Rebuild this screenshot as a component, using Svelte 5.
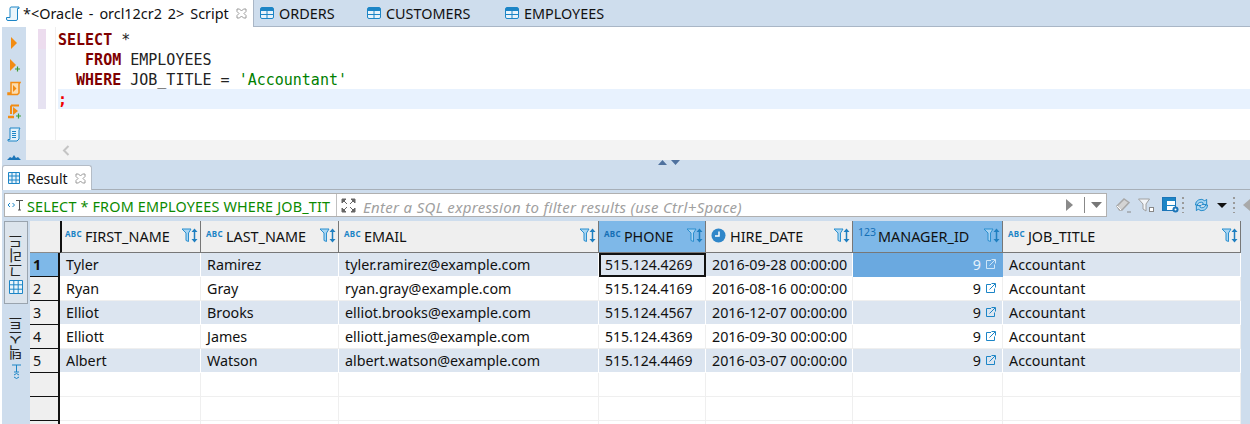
<script>
  const cols = [
    { name: 'FIRST_NAME', type: 'ABC', key: 0 },
    { name: 'LAST_NAME', type: 'ABC', key: 1 },
    { name: 'EMAIL', type: 'ABC', key: 2 },
    { name: 'PHONE', type: 'ABC', key: 3, sel: true },
    { name: 'HIRE_DATE', type: 'clock', key: 4 },
    { name: 'MANAGER_ID', type: '123', key: 5, sel: true },
    { name: 'JOB_TITLE', type: 'ABC', key: 6 }
  ];
  const rows = [
    ['Tyler', 'Ramirez', 'tyler.ramirez@example.com', '515.124.4269', '2016-09-28 00:00:00', '9', 'Accountant'],
    ['Ryan', 'Gray', 'ryan.gray@example.com', '515.124.4169', '2016-08-16 00:00:00', '9', 'Accountant'],
    ['Elliot', 'Brooks', 'elliot.brooks@example.com', '515.124.4567', '2016-12-07 00:00:00', '9', 'Accountant'],
    ['Elliott', 'James', 'elliott.james@example.com', '515.124.4369', '2016-09-30 00:00:00', '9', 'Accountant'],
    ['Albert', 'Watson', 'albert.watson@example.com', '515.124.4469', '2016-03-07 00:00:00', '9', 'Accountant'],
    ['', '', '', '', '', '', ''],
    ['', '', '', '', '', '', ''],
    ['', '', '', '', '', '', '']
  ];
  const tabs = ['ORDERS', 'CUSTOMERS', 'EMPLOYEES'];
</script>

{#snippet close()}
  <svg class="close" width="11" height="11" viewBox="0 0 11 11"><path d="M1 1h2.500l2 2 2-2H10v2.500l-2 2 2 2V10H7.500l-2-2-2 2H1V7.500l2-2-2-2z" fill="#fff" stroke="#9a9a9a"/></svg>
{/snippet}

{#snippet tableIcon()}
  <svg class="ticon" width="14" height="12" viewBox="0 0 14 12"><rect x=".5" y=".5" width="13" height="11" rx="1.500" fill="#e8f3fb" stroke="#1c85c6"/><rect x="1" y="1" width="12" height="3" fill="#1c85c6"/><path d="M1 7.500h12M7 4v7" stroke="#1c85c6"/></svg>
{/snippet}

{#snippet filterIcon(dim)}
  <svg class="ficon" class:dim width="17" height="15" viewBox="0 0 17 15"><path d="M1 1h9L7.500 5v8.500l-2.500-1V5z" fill="#a9d6f3" stroke="#2b8fcf"/><path d="M13.500 3v9" stroke="#1f7fc0" stroke-width="1.500"/><path d="M13.500 .5l-3 3.500h6zM13.500 14.500l-3-3.500h6z" fill="#1f7fc0"/></svg>
{/snippet}

<div class="app">
  <div class="tabbar">
    <div class="tab-active">
      <svg width="14" height="15" viewBox="0 0 14 15"><path d="M5 1h8v1.500h-1.500V13a1.500 1.500 0 0 1-1.500 1.500H2a1.500 1.500 0 0 1-1.500-1.500v-1.500H4V2.500A1.500 1.500 0 0 1 5 1z" fill="#eaf5fb" stroke="#1c85c6"/></svg>
      <span class="tab-title">*&lt;Oracle - orcl12cr2 2&gt; Script</span>
      {@render close()}
    </div>
    {#each tabs as t}
      <div class="tab">{@render tableIcon()}<span>{t}</span></div>
    {/each}
  </div>

  <div class="main">
    <div class="editor">
      <div class="side">
        <svg width="10" height="12" viewBox="0 0 10 12"><path d="M2 0l6 6-6 6z" fill="#f28c13"/></svg>
        <svg width="14" height="14" viewBox="0 0 14 14"><path d="M3 0l6 6-6 6z" fill="#f28c13"/><path d="M10.500 7.500v5M8 10h5" stroke="#3f9c35" stroke-width="1.200"/></svg>
        <svg width="14" height="15" viewBox="0 0 14 15"><path d="M4 1.500h9l-1 1.500v9l-1.500 1.500H1V12h3z" fill="#fcdcae" stroke="#f28c13" stroke-width="1.500"/><path d="M6 4l3.500 3.500L6 11z" fill="#f28c13"/></svg>
        <svg width="15" height="15" viewBox="0 0 15 15"><path d="M4 1.500h8M4 1.500V10" stroke="#f28c13" stroke-width="2"/><path d="M6 3l5 4-5 4z" fill="#f28c13"/><path d="M1 13h6" stroke="#f28c13" stroke-width="2.500"/><path d="M11.500 9.500v5M9 12h5" stroke="#3f9c35" stroke-width="1.200"/></svg>
        <svg width="14" height="15" viewBox="0 0 14 15"><path d="M3 1h10l-1 2v9l-2 2H1v-1.500h2z" fill="#e3f1fa" stroke="#1c85c6"/><path d="M5 4.500h4M5 6.500h4M5 8.500h4M5 10.500h4" stroke="#1c85c6"/></svg>
        <svg class="cut" width="14" height="8" viewBox="0 0 14 8"><path d="M0 6l3-3 2 1 2-3 2 3 2-1 3 3v2H0z" fill="#1c75b8"/></svg>
      </div>
      <div class="edit-main">
        <div class="code-area">
          <div class="ruler"><div class="mark"></div></div>
          <div class="code">
            <div class="ln"><b class="kw">SELECT</b> *</div>
            <div class="ln">{'   '}<b class="kw">FROM</b> EMPLOYEES</div>
            <div class="ln">{'  '}<b class="kw">WHERE</b> JOB_TITLE = <span class="str">'Accountant'</span></div>
            <div class="ln cur"><b class="semi">;</b></div>
          </div>
        </div>
        <div class="hscroll">
          <svg width="8" height="11" viewBox="0 0 8 11"><path d="M6.500 1L2 5.500 6.500 10" fill="none" stroke="#c4c4c4" stroke-width="2"/></svg>
        </div>
      </div>
    </div>

    <div class="sash">
      <svg width="24" height="5" viewBox="0 0 24 5"><path d="M0 5l4.500-5 4.500 5zM13 0h9l-4.500 5z" fill="#4f719e"/></svg>
    </div>

    <div class="rtabs">
      <div class="rtab">
        <svg width="12" height="12" viewBox="0 0 12 12"><path d="M.5.500h11v11H.5zM4 .5v11M8 .5v11M.5 4h11M.5 8h11" fill="#e8f3fb" stroke="#1c85c6"/></svg>
        <span>Result</span>
        {@render close()}
      </div>
    </div>

    <div class="filterbar">
      <div class="filter-input">
        <svg class="sqlic" width="17" height="12" viewBox="0 0 17 12"><path d="M3 4L1 6l2 2M5.500 4l2 2-2 2" fill="none" stroke="#1c85c6"/><path d="M9 1.500h7M12.500 1.500V11M11 11h3" fill="none" stroke="#555"/></svg>
        <span class="sql">SELECT * FROM EMPLOYEES WHERE JOB_TIT</span>
        <span class="sep"></span>
        <svg class="expand" width="15" height="15" viewBox="0 0 15 15"><path d="M1 5V1h4zM10 1h4v4zM1 10v4h4zM14 10v4h-4zM3 3l3 3M12 3L9 6M3 12l3-3M12 12L9 9" fill="#666" stroke="#666"/></svg>
        <span class="hint">Enter a SQL expression to filter results (use Ctrl+Space)</span>
        <svg class="play" width="8" height="12" viewBox="0 0 8 12"><path d="M0 0l7 6-7 6z" fill="#8a8a8a"/></svg>
        <span class="vline"></span>
        <svg class="drop" width="11" height="6" viewBox="0 0 11 6"><path d="M0 0h11L5.500 6z" fill="#777"/></svg>
      </div>
      <div class="tools">
        <svg class="t-eraser" width="16" height="15" viewBox="0 0 16 15"><path d="M1 8l7-7 5 3.500-7 7.500H3.500z" fill="#d4d4d4" stroke="#a8a8a8" stroke-width="1.500"/><path d="M1 8l4 4" stroke="#fff"/><path d="M11 14h4" stroke="#888"/></svg>
        <svg class="t-filter" width="16" height="15" viewBox="0 0 16 15"><path d="M.5 1h11L8 6v7L5 11V6z" fill="#f2f5f8" stroke="#a0a0a0"/><rect x="11.500" y="9.500" width="4" height="4" fill="#fff" stroke="#888"/></svg>
        <svg class="t-table" width="17" height="16" viewBox="0 0 17 16"><rect x=".5" y=".5" width="13" height="13" fill="#fff" stroke="#1c75b8"/><rect x="1" y="1" width="12" height="3" fill="#1c85c6"/><rect x="1" y="4" width="4" height="9" fill="#1c85c6"/><path d="M5 8.500h8" stroke="#1c85c6"/><circle cx="13.500" cy="12.500" r="3" fill="#1c75b8"/><circle cx="13.500" cy="12.500" r="1" fill="#fff"/></svg>
        <span class="dots d1"></span>
        <svg class="t-sync" width="15" height="16" viewBox="0 0 16 17"><path d="M1.500 8.500a6 6 0 0 1 10-4.500l2-1.500v5.500h-5l1.500-1.500A4 4 0 0 0 3.500 8.500z" fill="#a9d6f3" stroke="#1c85c6"/><path d="M14.500 8.500a6 6 0 0 1-10 4.500l-2 1.500V9h5L6 10.500a4 4 0 0 0 6.500-2z" fill="#a9d6f3" stroke="#1c85c6"/></svg>
        <svg class="t-arrow" width="10" height="5" viewBox="0 0 10 5"><path d="M0 0h10L5 5z" fill="#111"/></svg>
        <span class="dots d2"></span>
        <svg class="t-back" width="10" height="12" viewBox="0 0 10 12"><path d="M8 0L1 6l7 6z" fill="#a9a9a9"/></svg>
      </div>
    </div>

    <div class="bottom">
      <div class="vtabs">
        <div class="vtab on">
          <span class="vtext">그리드</span>
          <svg width="14" height="14" viewBox="0 0 14 14"><path d="M.5.500h13v13H.5zM4.800.500v13M9.200.500v13M.5 4.800h13M.5 9.200h13" fill="#eaf5fb" stroke="#1c85c6"/></svg>
        </div>
        <div class="vtab">
          <span class="vtext">텍스트</span>
          <svg width="11" height="15" viewBox="0 0 11 15"><path d="M1 1h9M5.500 1v7M3 8h5" fill="none" stroke="#1c85c6"/><path d="M3 11l2.500-1.500L8 11M3 13l2.500 1.500L8 13" fill="none" stroke="#1c85c6"/></svg>
        </div>
      </div>
      <div class="grid">
        <div class="corner"></div>
        {#each cols as c}
          <div class="hd" class:sel={c.sel} class:first={c.key === 0}>
            {#if c.type === 'clock'}
              <svg class="clock" width="15" height="15" viewBox="0 0 15 15"><circle cx="7.500" cy="7.500" r="7" fill="#2f86c9"/><path d="M8 3.500v4.500H4" fill="none" stroke="#fff" stroke-width="1.500"/></svg>
            {:else}
              <span class="type" class:num={c.type === '123'}>{c.type}</span>
            {/if}
            <span class="hname">{c.name}</span>
            {@render filterIcon(c.sel)}
          </div>
        {/each}
        {#each rows as r, i}
          <div class="rh" class:selrow={i === 0}>{r[0] ? i + 1 : ''}</div>
          {#each r as v, j}
            <div
              class="cell"
              class:alt={i % 2 === 0 && r[0]}
              class:phone={j === 3}
              class:date={j === 4}
              class:focus={i === 0 && j === 3}
              class:mgrsel={i === 0 && j === 5}
              class:right={j === 5 && v}
            >
              <span>{v}</span>
              {#if j === 5 && v}
                <svg class="link" width="11" height="11" viewBox="0 0 11 11"><path d="M6 1.500H1.500v8h8V5.500" fill="none" stroke={i === 0 ? '#cfe6f8' : '#1c85c6'}/><path d="M4.500 6.500L10 1M6.500 .5h4v4" fill="none" stroke={i === 0 ? '#cfe6f8' : '#1c85c6'}/></svg>
              {/if}
            </div>
          {/each}
        {/each}
      </div>
    </div>
  </div>
</div>

<style>
  :global(body) { margin: 0; background: #fff; }
  .app {
    width: 1250px; height: 424px; overflow: hidden;
    background: #fff; color: #111;
    font-family: "Noto Sans", "Open Sans", sans-serif; font-size: 14.3px;
    display: flex; flex-direction: column;
  }
  .tabbar { height: 27px; display: flex; align-items: stretch; flex: none; background: #cedded; }
  .tab-active {
    width: 254px; box-sizing: border-box; background: #fff; display: flex; align-items: center;
    padding: 0 0 0 6px; height: 27px; border-right: 1px solid #a9b6c6;
  }
  .tab-title { margin-left: 3px; white-space: pre; font-size: 14.4px; word-spacing: 2.2px; width: 205px; flex: none; }
  .tab-active .close { margin-left: 8px; }
  .tab { display: flex; align-items: center; height: 26px; border-bottom: 1px solid #a9b6c6; box-sizing: content-box; font-size: 14.4px; }
  .tab:nth-child(2) { width: 107px; padding-left: 6px; }
  .tab:nth-child(3) { width: 138px; }
  .tab:nth-child(4) { flex: 1; }
  .tab span { margin-left: 5px; }
  .main { flex: 1; min-height: 0; margin-left: 2px; background: #cedded; display: flex; flex-direction: column; }
  .editor { height: 133px; display: flex; flex: none; }
  .side {
    width: 24px; flex: none; padding-top: 4px; box-sizing: border-box; overflow: hidden;
    display: grid; grid-auto-rows: 23px; align-items: center; justify-items: center; height: 133px;
  }
  .edit-main { flex: 1; background: #fff; display: flex; flex-direction: column; min-width: 0; }
  .code-area { flex: 1; display: flex; min-height: 0; }
  .ruler { width: 30px; flex: none; padding: 2px 0 0 12px; box-sizing: border-box; border-right: 1px solid #efefef; }
  .mark { width: 8px; height: 80px; background: linear-gradient(#ecdcee 0 20px, #e6e2f1 20px); }
  .code {
    flex: 1; padding: 2px 0 0 2px;
    font-family: "DejaVu Sans Mono", monospace; font-size: 15px;
  }
  .ln { height: 20px; line-height: 22px; white-space: pre; color: #222; }
  .ln.cur { background: #e8f2fe; }
  .kw { color: #7f0000; font-weight: bold; }
  .str { color: #008000; }
  .semi { color: #f00000; }
  .hscroll { height: 20px; flex: none; background: #f3f3f3; padding-left: 36px; display: flex; align-items: center; }
  .sash { height: 5px; flex: none; display: flex; padding-left: 656px; }
  .rtabs { height: 25px; flex: none; display: flex; box-sizing: border-box; border-bottom: 1px solid #a7afb8; }
  .rtab {
    width: 90px; box-sizing: border-box; height: 25px; background: #fff;
    border: 1px solid #b4bcc6; border-bottom: none; border-radius: 3px 3px 0 0;
    display: flex; align-items: center; padding-left: 5px; gap: 7px; font-size: 14px;
  }
  .filterbar { height: 31px; flex: none; display: flex; align-items: flex-start; padding: 3px 0 0 2px; box-sizing: border-box; }
  .filter-input {
    width: 1103px; height: 24px; box-sizing: border-box; background: #fff; border: 1px solid #b0b0b0;
    display: flex; align-items: center; flex: none; overflow: hidden;
  }
  .sqlic { margin-left: 2px; flex: none; }
  .sql { color: #0b8a00; width: 309px; white-space: nowrap; margin-left: 3px; flex: none; padding-top: 4px; line-height: 18px; font-size: 14.4px; letter-spacing: .17px; }
  .sep { width: 1px; height: 22px; background: #c0c0c0; flex: none; }
  .expand { margin-left: 4px; flex: none; }
  .hint { color: #a0a0a0; font-style: italic; margin-left: 7px; flex: 1; white-space: nowrap; font-size: 15px; letter-spacing: .31px; padding-top: 3px; line-height: 18px; }
  .play { flex: none; margin-right: 10px; }
  .vline { width: 1px; height: 16px; background: #888; flex: none; margin-right: 6px; }
  .drop { flex: none; margin-right: 4px; }
  .tools { flex: 1; display: flex; align-items: center; height: 24px; padding-left: 9px; overflow: hidden; }
  .tools svg { flex: none; }
  .t-filter { margin-left: 6px; }
  .t-table { margin-left: 8px; }
  .d1 { margin-left: 3px; }
  .t-sync { margin-left: 10px; }
  .t-arrow { margin-left: 8px; }
  .d2 { margin-left: 6px; }
  .t-back { margin-left: 7px; }
  .dots { width: 2px; height: 16px; flex: none; background: repeating-linear-gradient(#9a9a9a 0 2px, transparent 2px 5px); }
  .bottom { flex: 1; display: flex; min-height: 0; }
  .vtabs { width: 28px; flex: none; padding-left: 2px; box-sizing: border-box; display: flex; flex-direction: column; gap: 12px; }
  .vtab { width: 24px; display: flex; flex-direction: column; align-items: center; gap: 5px; }
  .vtab.on { height: 83px; box-sizing: border-box; background: #dce4ec; border: 1px solid #9aa4ae; padding-top: 12px; gap: 3px; }
  .vtext {
    writing-mode: vertical-rl; transform: rotate(180deg);
    font-family: "Noto Sans CJK KR", sans-serif; font-size: 14.4px; line-height: 18px; color: #222;
  }
  .grid {
    flex: none; display: grid; align-content: start; background: #fff; min-width: 0;
    grid-template-columns: 30px 141px 138px 260px 107px 147px 150px 238px;
    grid-template-rows: 32px repeat(8, 24px);
  }
  .corner { background: #efefef; border-bottom: 1px solid #8a8a8a; box-sizing: border-box; }
  .hd {
    background: #efefef; border-right: 1px solid #777; border-bottom: 1px solid #777;
    display: flex; align-items: center; padding: 0 2px 0 5px; box-sizing: border-box; min-width: 0; font-size: 14.4px;
  }
  .hd.first { border-left: 2px solid #111; padding-left: 3px; }
  .hd.sel { background: #7eb8e8; }
  .hd.sel .type { color: #156fb5; }
  .type { font-size: 8px; font-weight: bold; color: #1c85c6; margin-right: 3px; align-self: flex-start; margin-top: 7px; letter-spacing: .3px; line-height: 11px; }
  .type.num { font-weight: normal; font-size: 10.500px; color: #1a6fae; margin-top: 6px; margin-right: 2px; letter-spacing: 0; }
  .clock { margin-right: 4px; flex: none; margin-top: -3px; }
  .hname { flex: 1; white-space: nowrap; }
  .ficon { flex: none; margin-top: -3px; }
  .ficon.dim path:first-child { fill: #a9d3f2; }
  .rh {
    background: #efefef; border-right: 2px solid #111; border-bottom: 1px solid #111;
    padding-left: 3px; line-height: 23px; box-sizing: border-box;
  }
  .rh.selrow { background: #7eb8e8; font-weight: bold; }
  .cell {
    padding: 0 0 0 6px; line-height: 23px; box-sizing: border-box; white-space: nowrap; overflow: hidden;
    border-right: 1px solid #efefef; border-bottom: 1px solid #efefef; color: #111;
  }
  .cell.phone { font-size: 14px; }
  .cell.alt { background: #dce5f0; border-color: #fff; }
  .cell.focus { border: 2px solid #111; padding-left: 4px; line-height: 20px; }
  .cell.mgrsel { background: #6aa9e0; color: #e6f1fb; border-color: #6aa9e0; }
  .cell.right { display: flex; justify-content: flex-end; align-items: center; gap: 4px; padding-right: 6px; }
</style>
